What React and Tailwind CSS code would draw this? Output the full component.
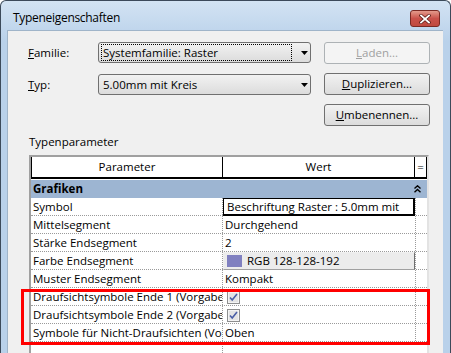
import React from 'react'

const font = { fontFamily: '"Open Sans", "Noto Sans", sans-serif' }

function Combo({ children, focus = false }) {
  return (
    <div className="flex h-[21px] w-[213px] items-center rounded-[3px] border border-[#707070] bg-gradient-to-b from-[#f2f2f2] to-[#dcdcdc] pl-[3px] pr-[2px]">
      <div className={`flex h-[15px] w-[191px] items-center pl-[1px] ${focus ? 'outline outline-1 outline-dotted outline-[#000]' : ''}`}>
        <span className="whitespace-nowrap text-[11.5px] leading-none text-black">{children}</span>
      </div>
      <svg width="7" height="4" viewBox="0 0 7 4" className="ml-[10px]">
        <path d="M0 0h7L3.5 4z" fill="#000" />
      </svg>
    </div>
  )
}

function Btn({ children, disabled = false }) {
  return (
    <div
      className={`flex h-[22px] w-[106px] items-center justify-center rounded-[3px] border text-[11.5px] leading-none ${
        disabled
          ? 'border-[#adb2b5] bg-[#f4f4f4] text-[#a0a0a0]'
          : 'border-[#707070] bg-gradient-to-b from-[#f2f2f2] to-[#dcdcdc] text-black'
      }`}
    >
      {children}
    </div>
  )
}

function Check() {
  return (
    <svg width="13" height="13" viewBox="0 0 13 13" className="ml-[4px]">
      <rect x="0.5" y="0.5" width="12" height="12" fill="#e4e4e4" stroke="#8e8f8f" />
      <rect x="1.5" y="1.5" width="10" height="10" fill="none" stroke="#f4f4f4" />
      <path d="M3 6.5l2.2 2.5L10 3" fill="none" stroke="#4a5ea6" strokeWidth="1.6" />
    </svg>
  )
}

const rows = [
  { name: 'Symbol', value: 'box', text: 'Beschriftung Raster : 5.0mm mit' },
  { name: 'Mittelsegment', text: 'Durchgehend' },
  { name: 'Stärke Endsegment', text: '2' },
  { name: 'Farbe Endsegment', value: 'color', text: 'RGB 128-128-192' },
  { name: 'Muster Endsegment', text: 'Kompakt' },
  { name: 'Draufsichtsymbole Ende 1 (Vorgabe)', value: 'check' },
  { name: 'Draufsichtsymbole Ende 2 (Vorgabe)', value: 'check' },
  { name: 'Symbole für Nicht-Draufsichten (Vorgabe)', text: 'Oben' },
]

function ValueCell({ row }) {
  if (row.value === 'box') {
    return (
      <div className="flex h-[18px] w-[192px] items-center overflow-hidden border border-r-2 border-b-2 border-black pl-[3px]">
        <span className="whitespace-nowrap text-[11.5px] leading-none">{row.text}</span>
      </div>
    )
  }
  if (row.value === 'color') {
    return (
      <div className="flex h-[18px] w-[192px] items-center gap-[5px] border border-[#f0f0f0] border-r-[#707070] border-b-[#a0a0a0] bg-[#ececec] pl-[3px]">
        <div className="h-[12px] w-[15px] bg-[#8080c0]" />
        <span className="whitespace-nowrap text-[11.5px] leading-none">{row.text}</span>
      </div>
    )
  }
  if (row.value === 'check') {
    return (
      <div className="flex h-[18px] w-[192px] items-center">
        <Check />
      </div>
    )
  }
  return (
    <div className="flex h-[18px] w-[192px] items-center pl-[2px]">
      <span className="whitespace-nowrap text-[11.5px] leading-none">{row.text}</span>
    </div>
  )
}

export default function App() {
  return (
    <div className="relative h-[353px] w-[451px] overflow-hidden text-black" style={font}>
      <div className="flex h-full w-full flex-col rounded-t-[6px] border border-b-0 border-[#3c4a5a] bg-gradient-to-b from-[#d3e3f3] to-[#b9d1ea] to-[40px]">
        {/* title bar */}
        <div className="flex h-[29px] shrink-0 items-start justify-between pl-[12px] pr-[10px]">
          <span className="mt-[11px] text-[12px] leading-none tracking-[-0.3px] text-black">Typeneigenschaften</span>
          <div className="mt-[9px] flex h-[17px] w-[30px] items-center justify-center rounded-[3px] border border-[#7a2a24] bg-gradient-to-b from-[#e39a8c] via-[#c9514a] to-[#c04a3f]">
            <svg width="12" height="10" viewBox="0 0 12 10">
              <path d="M2 1.5l8 7M10 1.5l-8 7" stroke="#5a1a14" strokeWidth="3.2" strokeLinecap="square" />
              <path d="M2 1.5l8 7M10 1.5l-8 7" stroke="#fff" strokeWidth="1.8" strokeLinecap="square" />
            </svg>
          </div>
        </div>

        {/* client area */}
        <div className="ml-[6px] mr-[7px] flex flex-1 flex-col border-t border-l border-[#9fb4c9] bg-[#f0f0f0]">
          <div className="flex pt-[11px]">
            <div className="flex flex-col gap-[11px] pl-[20px]">
              <div className="flex items-center">
                <span className="w-[70px] text-[11.5px] leading-none">
                  <span className="underline">F</span>amilie:
                </span>
                <Combo focus>Systemfamilie: Raster</Combo>
              </div>
              <div className="flex items-center">
                <span className="w-[70px] text-[11.5px] leading-none">
                  <span className="underline">T</span>yp:
                </span>
                <Combo>5.00mm mit Kreis</Combo>
              </div>
            </div>
            <div className="ml-[13px] flex flex-col gap-[9px]">
              <Btn disabled>
                <span className="underline">L</span>aden...
              </Btn>
              <Btn>
                <span className="underline">D</span>uplizieren...
              </Btn>
              <Btn>
                <span className="underline">U</span>mbenennen...
              </Btn>
            </div>
          </div>

          <div className="mt-[8px] pl-[21px] text-[11.5px] leading-[16px]">Typenparameter</div>

          {/* property table */}
          <div className="ml-[21px] mt-[5px] flex w-[400px] flex-1 flex-col border-2 border-b-0 border-[#a0a0a0] border-r-[#e3e3e3] bg-white">
            <div className="flex h-[22px] shrink-0 border-b-2 border-black">
              <div className="flex w-[191px] items-center justify-center border-l border-black text-[11.5px] leading-none">
                Parameter
              </div>
              <div className="flex w-[192px] items-center justify-center border-l border-black text-[11.5px] leading-none">
                Wert
              </div>
              <div className="flex w-[13px] items-center justify-center border-x border-black text-[11.5px] leading-none">
                =
              </div>
            </div>
            <div className="mt-[1px] flex h-[18px] shrink-0 items-center justify-between bg-[#9db5d2] pl-[2px] pr-[6px]">
              <span className="text-[11.5px] font-bold leading-none">Grafiken</span>
              <svg width="7" height="8" viewBox="0 0 7 8">
                <path d="M0.5 3.5L3.5 0.8 6.5 3.5M0.5 7.2L3.5 4.5 6.5 7.2" fill="none" stroke="#000" strokeWidth="1.4" />
              </svg>
            </div>
            {rows.map((row) => (
              <div key={row.name} className="flex h-[18px] shrink-0 border-b border-dotted border-[#9a9a9a]">
                <div className="flex w-[191px] items-center overflow-hidden pl-[2px]">
                  <span className="whitespace-nowrap text-[11.5px] leading-none">{row.name}</span>
                </div>
                <div className="border-l border-dotted border-[#9a9a9a]" />
                <ValueCell row={row} />
                <div className="w-[12px] border-l border-dotted border-[#9a9a9a]" />
              </div>
            ))}
            <div className="flex flex-1">
              <div className="w-[191px]" />
              <div className="border-l border-dotted border-[#9a9a9a]" />
            </div>
          </div>
        </div>
      </div>

      {/* red highlight annotation */}
      <div className="absolute left-[21px] top-[289px] h-[56px] w-[409px] border-[3px] border-[#ff0000]" />
    </div>
  )
}
